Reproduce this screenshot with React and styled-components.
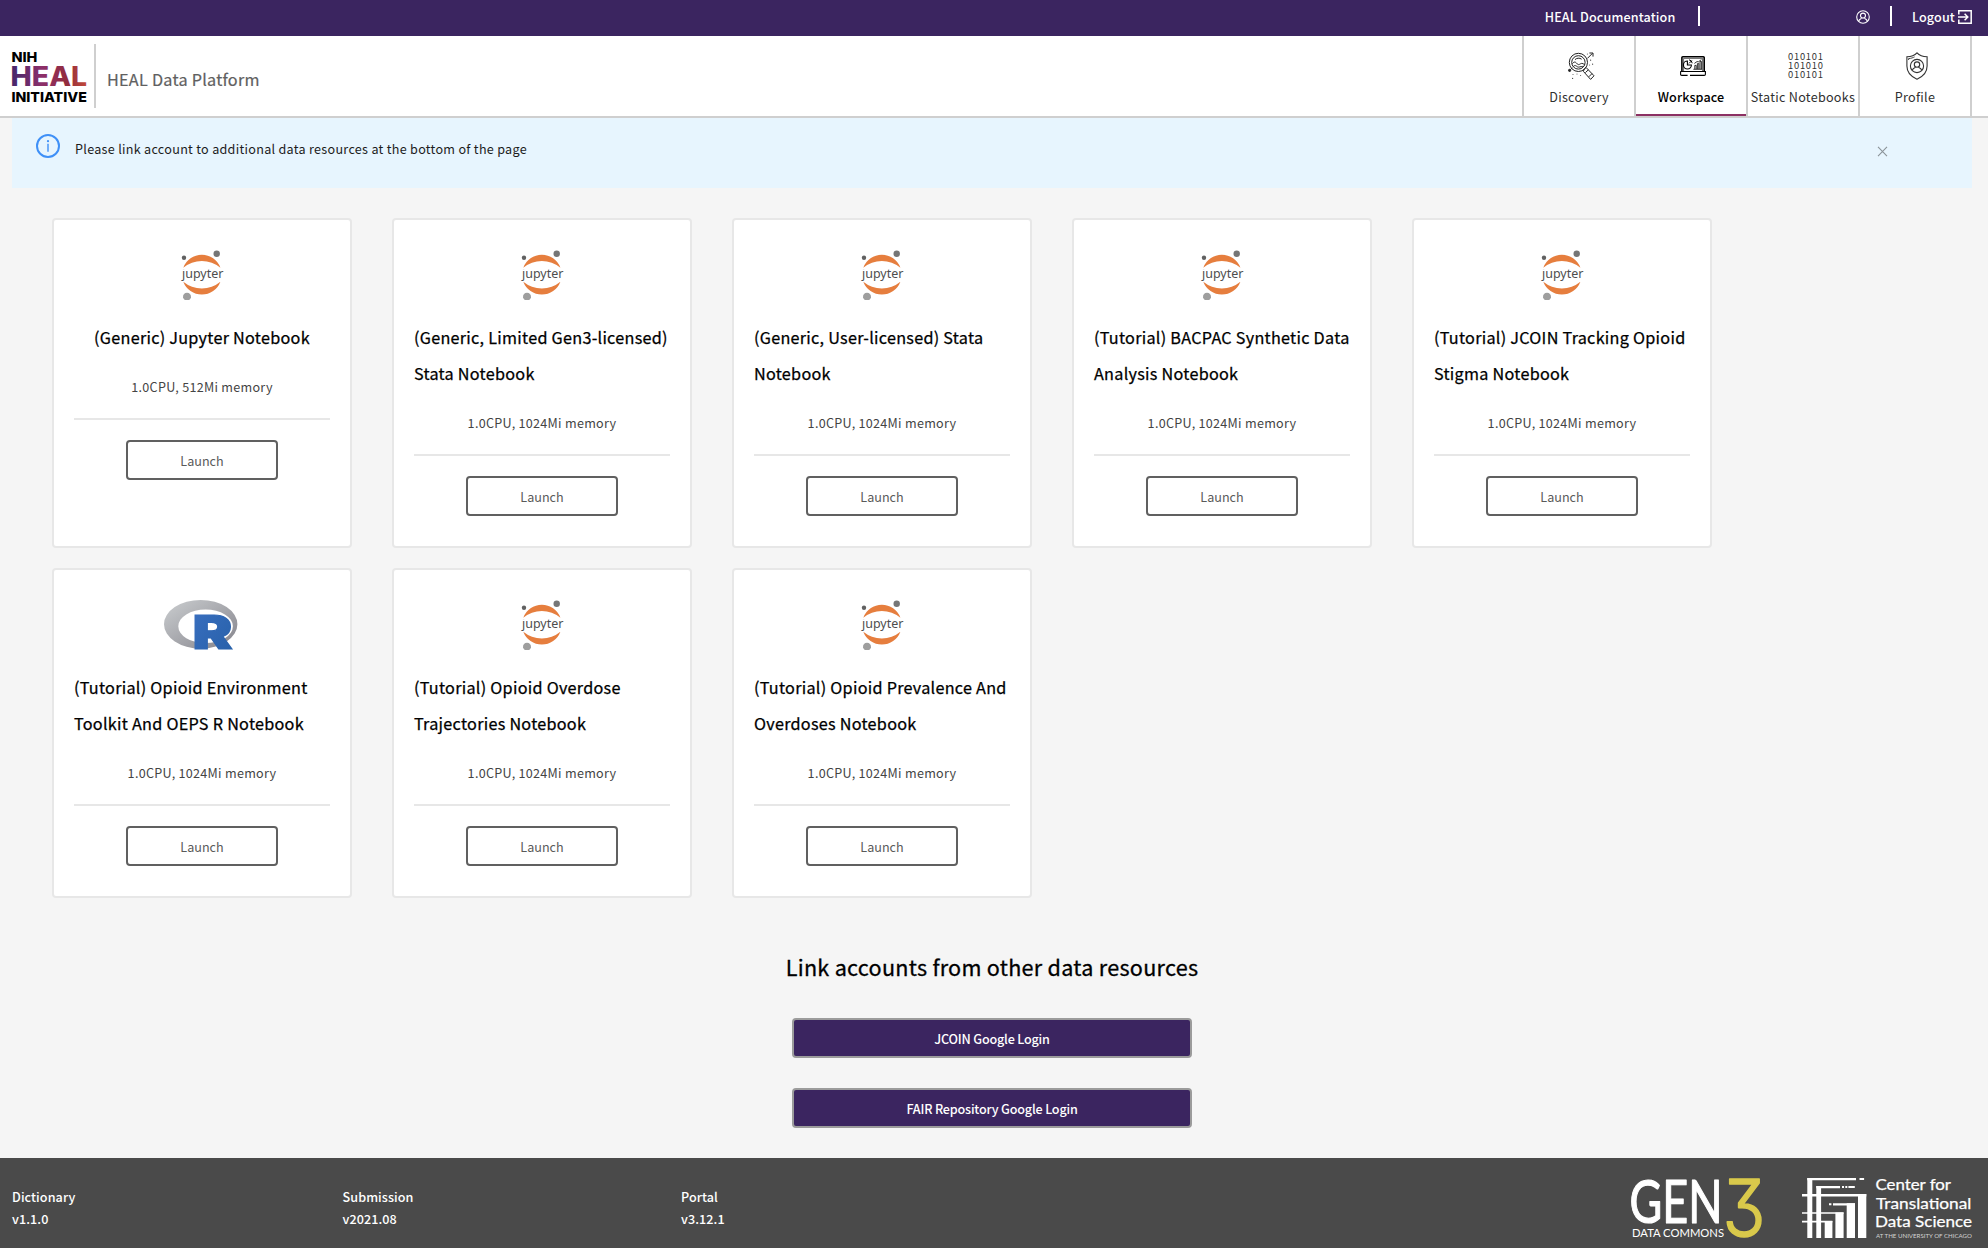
import React from "react";
import styled, { createGlobalStyle } from "styled-components";

const SANS = '"Noto Sans CJK SC", "Noto Sans", sans-serif';
const PURPLE = "#3b2560";
const LINE = "#cfcfcf";

const GlobalStyle = createGlobalStyle`
  *, *::before, *::after { box-sizing: border-box; }
  body {
    margin: 0;
    background: #f5f5f5;
    font-family: ${SANS};
    font-size: 12.6px;
    letter-spacing: 0.28px;
    color: #262626;
  }
  button { font-family: inherit; margin: 0; cursor: pointer; }
  svg { display: block; flex: none; overflow: visible; }
`;

const Page = styled.div`
  display: flex;
  flex-direction: column;
  height: 1248px;
  width: 100%;
`;

const TopBar = styled.div`
  display: flex;
  justify-content: flex-end;
  align-items: flex-start;
  height: 36px;
  padding: 6px 16px 0 0;
  background: ${PURPLE};
  color: #fff;
`;

const TopLink = styled.a`
  display: flex;
  align-items: center;
  gap: 3px;
  height: 22px;
  padding: ${(p) => p.$pad};
  font-weight: 500;
  letter-spacing: 0.14px;
  line-height: 22px;
`;

const TopDivider = styled.span`
  width: 2px;
  height: 20px;
  background: #fff;
`;

const NavBar = styled.header`
  display: flex;
  justify-content: space-between;
  height: 82px;
  padding: 0 16px 0 12px;
  background: #fff;
  border-bottom: 2px solid ${LINE};
`;

const Brand = styled.div`
  display: flex;
  align-items: flex-start;
  padding-top: 8px;
`;

const BrandMark = styled.div`
  height: 64px;
  width: 84px;
  padding-top: 7px;
  border-right: 2px solid ${LINE};
`;

const BrandName = styled.div`
  margin: 15px 0 0 11px;
  font-size: 16.2px;
  line-height: 40px;
  letter-spacing: 0.26px;
  color: #606060;
  -webkit-text-stroke: 0.2px #606060;
`;

const Nav = styled.nav`
  display: flex;
  border-right: 2px solid ${LINE};
`;

const NavItem = styled.a`
  display: flex;
  flex-direction: column;
  align-items: center;
  width: 112px;
  height: 80px;
  padding-top: 14px;
  border-left: 2px solid ${LINE};
  box-shadow: ${(p) => (p.$active ? "inset 0 -2px 0 #8c3063" : "none")};
  color: ${(p) => (p.$active ? "#000" : "#303030")};
  font-weight: ${(p) => (p.$active ? 500 : 400)};
  letter-spacing: ${(p) => (p.$active ? "0.1px" : "0.28px")};
`;

const NavIcon = styled.span`
  display: flex;
  align-items: center;
  justify-content: center;
  height: 32px;
  padding-left: 4px;
`;

const NavLabel = styled.span`
  margin-top: 4px;
  line-height: 22px;
  white-space: nowrap;
`;

const Main = styled.main`
  flex: 1;
  display: flex;
  flex-direction: column;
  padding: 0 16px 0 12px;
`;

const Banner = styled.div`
  display: flex;
  align-items: flex-start;
  height: 70px;
  padding: 16px 84px 0 24px;
  background: #e7f5fe;
`;

const BannerText = styled.span`
  flex: 1;
  margin-left: 15px;
  line-height: 30px;
  letter-spacing: 0.29px;
  color: #1c1c1c;
`;

const BannerClose = styled.span`
  padding-top: 12px;
`;

const Cards = styled.section`
  display: flex;
  flex-wrap: wrap;
  gap: 20px 40px;
  margin: 30px 40px 0;
`;

const Card = styled.article`
  display: flex;
  flex-direction: column;
  align-items: center;
  width: 300px;
  height: 330px;
  padding: 30px 20px 0;
  background: #fff;
  border: 2px solid #e7e7e7;
  border-radius: 4px;
`;

const CardTitle = styled.h3`
  margin: 19px 0 0;
  font-size: 16.2px;
  font-weight: 400;
  line-height: 36px;
  letter-spacing: 0.27px;
  color: #000;
  -webkit-text-stroke: 0.25px #000;
`;

const CardMeta = styled.div`
  margin-top: 21px;
  line-height: 22px;
  color: #444;
`;

const CardRule = styled.hr`
  width: 100%;
  height: 2px;
  margin: 20px 0;
  border: 0;
  background: #e7e7e7;
`;

const LaunchButton = styled.button`
  width: 152px;
  height: 40px;
  padding: 2px 0 0;
  border: 2px solid #606060;
  border-radius: 4px;
  background: #fff;
  font-size: 12.6px;
  line-height: 34px;
  color: #5a5a5a;
`;

const Accounts = styled.section`
  display: flex;
  flex-direction: column;
  align-items: center;
  gap: 30px;
  margin-top: 49px;
`;

const AccountsTitle = styled.h2`
  margin: 0 0 1px;
  font-size: 21.6px;
  font-weight: 400;
  line-height: 40px;
  letter-spacing: 0.27px;
  color: #000;
  -webkit-text-stroke: 0.3px #000;
`;

const LoginButton = styled.button`
  width: 400px;
  height: 40px;
  padding: 2px 0 0;
  border: 2px solid #9b9b9b;
  border-radius: 4px;
  background: ${PURPLE};
  font-size: 12.6px;
  font-weight: 500;
  letter-spacing: -0.18px;
  line-height: 34px;
  color: #fff;
`;

const Footer = styled.footer`
  display: flex;
  justify-content: space-between;
  height: 90px;
  padding: 20px 16px 0 12px;
  background: #4a4a4a;
  color: #fff;
`;

const Versions = styled.div`
  display: grid;
  grid-template-columns: 330.5px 338.5px auto;
  padding-top: 8px;
  font-weight: 500;
  line-height: 22px;
  letter-spacing: 0.08px;
`;

const Logos = styled.div`
  display: flex;
  gap: 40px;
`;

const FlatThree = styled.text`
  font-family: Inter, sans-serif;
  font-weight: 300;
  font-feature-settings: "cv09";
`;

function HealLogo() {
  return (
    <svg width="76" height="54" viewBox="0 0 76 54" fontFamily="Inter, sans-serif" fontWeight="800" letterSpacing="0">
      <defs>
        <linearGradient id="heal" x1="0" y1="0" x2="74" y2="0" gradientUnits="userSpaceOnUse">
          <stop offset="0" stopColor="#45276b" />
          <stop offset="0.4" stopColor="#8c2f6b" />
          <stop offset="0.75" stopColor="#932c3c" />
          <stop offset="1" stopColor="#c0493a" />
        </linearGradient>
      </defs>
      <text x="-0.6" y="11" fontSize="13.6" textLength="26" lengthAdjust="spacingAndGlyphs">NIH</text>
      <text x="-1.4" y="35.3" fontSize="26.8" textLength="76.5" lengthAdjust="spacingAndGlyphs" fill="url(#heal)">HEAL</text>
      <text x="-0.6" y="51" fontSize="13.8" textLength="75.4" lengthAdjust="spacingAndGlyphs">INITIATIVE</text>
    </svg>
  );
}

function UserIcon() {
  return (
    <svg width="14" height="14" viewBox="0 0 14 14" fill="none" stroke="#fff" strokeWidth="1.1">
      <circle cx="7" cy="7" r="6.3" />
      <circle cx="7" cy="5.6" r="2.5" />
      <path d="M2.6 11.3C3 9.6 4.2 8.9 5.6 8.3M11.4 11.3C11 9.6 9.8 8.9 8.4 8.3" />
    </svg>
  );
}

function LogoutIcon() {
  return (
    <svg width="14" height="14" viewBox="0 0 14 14" fill="none" stroke="#fff" strokeWidth="1.5">
      <path d="M0.8 4.4V0.8H13.2V13.2H0.8V9.6" />
      <path d="M0 7H9.6M6.6 3.8L9.8 7L6.6 10.2" />
    </svg>
  );
}

function DiscoveryIcon() {
  return (
    <svg width="26" height="28" viewBox="0 0 26 28" fill="none" stroke="#222" strokeWidth="1">
      <circle cx="10.4" cy="10.4" r="9.1" />
      <circle cx="10.4" cy="10.4" r="6.7" />
      <path d="M4.4 11.6C6.6 8.8 8 10.4 9.3 12C10.8 13.8 12.4 11.2 14 11.4C15.4 11.6 16 12.4 16.6 12.8M5.4 14.4C7 12.8 8 13.8 9.4 14.8C11 15.8 12.6 14.2 14.8 14.4M7 7.6C8.6 6 11.6 5.6 13.6 7.2" />
      <path d="M16.2 17L18 15.4L26 23.8L22.6 27.4L15.4 19.4ZM17.4 20.6L20.4 17.8M20.8 24.8L24 21.6" />
      <path d="M19.4 6.4L24.4 1.4M21.4 1H25V4.6" />
      <circle cx="1.6" cy="18.4" r="1.1" fill="#222" />
      <path d="M2.4 17.6L4.4 15.8" />
      <g fill="#444" stroke="none">
        <circle cx="22.6" cy="8.2" r="0.6" /><circle cx="24.6" cy="12.2" r="0.6" />
        <circle cx="21.6" cy="13" r="0.5" /><circle cx="9" cy="22" r="0.5" />
        <circle cx="12.6" cy="23.4" r="0.5" /><circle cx="4.6" cy="26.4" r="0.6" />
        <circle cx="5" cy="22.4" r="0.5" /><circle cx="19.4" cy="2" r="0.5" />
      </g>
    </svg>
  );
}

function WorkspaceIcon() {
  return (
    <svg width="26" height="20" viewBox="0 0 26 20" fill="none" stroke="#000">
      <path d="M1.9 15.4V1.6Q1.9 0.8 2.8 0.8H23.4Q24.2 0.8 24.2 1.6V15.4" strokeWidth="1.6" />
      <path d="M3.6 15V2.4H22.6V15" strokeWidth="0.6" />
      <path d="M0.6 15.5H25.4V18.2Q25.4 19.4 24.2 19.4H10M7.6 19.4H1.8Q0.6 19.4 0.6 18.2V15.2" strokeWidth="1.1" />
      <path d="M7.4 5A4 4 0 1 0 11.4 9H7.4Z" strokeWidth="1.1" />
      <path d="M9 7.4L11.8 4.6M9 3.8A3.8 3.8 0 0 1 12.2 7.2" strokeWidth="1" />
      <path d="M13.4 13.3H22M14.8 13V9.4H16.2V13M17.4 13V7.6H18.8V13M20 13V5.4H21.4V13M14.4 7.4L17 5.6L18.4 5.8L21.4 3.6" strokeWidth="0.8" />
    </svg>
  );
}

function BinaryIcon() {
  return (
    <svg width="36" height="28" viewBox="0 0 36 28" fontFamily='"Noto Sans CJK SC", sans-serif' fontSize="9.4" fill="#333" letterSpacing="0">
      <text x="1" y="7.6" textLength="35">010101</text>
      <text x="1" y="16.9" textLength="35">101010</text>
      <text x="1" y="26.2" textLength="35">010101</text>
    </svg>
  );
}

function ProfileIcon() {
  return (
    <svg width="22" height="28" viewBox="0 0 22 28" fill="none" stroke="#333" strokeWidth="1.1">
      <path d="M11 0.8C8.6 3.4 4.8 4.6 0.9 4.7V14C0.9 20.4 5 24.6 11 27.2C17 24.6 21.1 20.4 21.1 14V4.7C17.2 4.6 13.4 3.4 11 0.8Z" />
      <path d="M2.6 8V6.6C5.2 6.4 7.2 5.6 8.6 4.9" strokeWidth="0.9" />
      <circle cx="11" cy="14" r="6.6" />
      <circle cx="11" cy="12.6" r="2.7" />
      <path d="M6.2 18.4C6.6 16.6 8 15.8 9.6 15.2M15.8 18.4C15.4 16.6 14 15.8 12.4 15.2" />
    </svg>
  );
}

function InfoIcon() {
  return (
    <svg width="24" height="24" viewBox="0 0 24 24" fill="none" stroke="#3f90f7">
      <circle cx="12" cy="12" r="11" strokeWidth="2" />
      <path d="M12 9.8V17.8" strokeWidth="1.4" />
      <circle cx="12" cy="7.2" r="1.1" fill="#3f90f7" stroke="none" />
    </svg>
  );
}

function CloseIcon() {
  return (
    <svg width="11" height="11" viewBox="0 0 11 11" stroke="#8b9399" strokeWidth="1.1">
      <path d="M1 0.8L10 10.2M10 0.8L1 10.2" />
    </svg>
  );
}

function JupyterLogo() {
  return (
    <svg width="43" height="50" viewBox="0 0 43 50">
      <text x="1" y="27.6" fontFamily='"Noto Sans", sans-serif' fontSize="12.6" letterSpacing="0" fill="#4e4e4e" textLength="41.4" lengthAdjust="spacingAndGlyphs">jupyter</text>
      <rect x="0" y="15" width="5" height="4.6" fill="#fff" />
      <path d="M2.3 17.7A19.8 19.8 0 0 1 39.4 17.7A29 29 0 0 0 2.3 17.7Z" fill="#e67e3e" />
      <path d="M2.3 31.7A19.8 19.8 0 0 0 39.4 31.7A29 29 0 0 1 2.3 31.7Z" fill="#e67e3e" />
      <circle cx="3" cy="7.7" r="2.2" fill="#616161" />
      <circle cx="35.7" cy="3.8" r="3.2" fill="#767676" />
      <path d="M3.8 50A4 4 0 1 1 8.2 50Z" fill="#9e9e9e" />
    </svg>
  );
}

function RLogo() {
  return (
    <svg width="76" height="50" viewBox="0 0 76 50">
      <defs>
        <linearGradient id="ring" x1="0" y1="0" x2="1" y2="1">
          <stop offset="0" stopColor="#cbced0" />
          <stop offset="1" stopColor="#84838b" />
        </linearGradient>
        <linearGradient id="letter" x1="0" y1="0" x2="1" y2="1">
          <stop offset="0" stopColor="#3a6fc0" />
          <stop offset="1" stopColor="#2660a8" />
        </linearGradient>
      </defs>
      <path fillRule="evenodd" fill="url(#ring)" d="M0 24.3a36.7 24.3 0 1 0 73.4 0a36.7 24.3 0 1 0 -73.4 0ZM14.3 26.3a27.3 16.8 0 1 1 54.6 0a27.3 16.8 0 1 1 -54.6 0Z" />
      <text x="28.4" y="49.4" fontFamily="Inter, sans-serif" fontWeight="900" fontSize="46.8" letterSpacing="0" textLength="40" lengthAdjust="spacingAndGlyphs" fill="url(#letter)" stroke="url(#letter)" strokeWidth="1.2">R</text>
    </svg>
  );
}

function Gen3Logo() {
  return (
    <svg width="130" height="60" viewBox="0 0 130 60" fontFamily="Lato, sans-serif" letterSpacing="0">
      <text x="-2.5" y="44.6" fontSize="60" textLength="93" lengthAdjust="spacingAndGlyphs" fill="#fff" stroke="#fff" strokeWidth="1.2" strokeLinejoin="round">GEN</text>
      <text x="0" y="58.6" fontSize="12" textLength="92" lengthAdjust="spacingAndGlyphs" fill="#fff">DATA COMMONS</text>
      <FlatThree x="90.5" y="58.4" fontSize="79" textLength="43" lengthAdjust="spacingAndGlyphs" fill="#d9c94b" stroke="#d9c94b" strokeWidth="1.6" strokeLinejoin="round">3</FlatThree>
    </svg>
  );
}

function CtdsLogo() {
  return (
    <svg width="170" height="60" viewBox="0 0 170 60" fill="#fff" fontFamily="Lato, sans-serif" letterSpacing="0">
      <path d="M5.3 0h48.7v2.2h-48.7zM57.5 0h4.6v2h-4.6zM14.3 8h23.7v2.2h-23.7zM40 8h2v2h-2zM43.3 8h2v2h-2zM46.4 8h6.4v2h-6.4zM0 16h64.3v2.4h-64.3zM27 25.2h2.4v2h-2.4zM31 25.2h22v2.2h-22zM0 34.2h41.6v1.6h-41.6zM0 42.8h30.4v1.8h-30.4z" />
      <path d="M5.3 0h5v60h-5zM14.3 8h4.8v52h-4.8zM22.7 43h7.7v17h-7.7zM33.4 34.4h8.2v25.6h-8.2zM44.7 25.2h8.3v34.8h-8.3zM56 16h8.3v44h-8.3z" />
      <text x="73.4" y="12" fontSize="16" textLength="75.6" lengthAdjust="spacingAndGlyphs" stroke="#fff" strokeWidth="0.25">Center for</text>
      <text x="74" y="30.8" fontSize="16" textLength="95.4" lengthAdjust="spacingAndGlyphs" stroke="#fff" strokeWidth="0.25">Translational</text>
      <text x="73" y="49.4" fontSize="16" textLength="97" lengthAdjust="spacingAndGlyphs" stroke="#fff" strokeWidth="0.25">Data Science</text>
      <text x="74" y="59.8" fontSize="5.6" textLength="96" lengthAdjust="spacingAndGlyphs" fill="#d4d4d4">AT THE UNIVERSITY OF CHICAGO</text>
    </svg>
  );
}

const NAV = [
  { label: "Discovery", Icon: DiscoveryIcon },
  { label: "Workspace", Icon: WorkspaceIcon, active: true },
  { label: "Static Notebooks", Icon: BinaryIcon },
  { label: "Profile", Icon: ProfileIcon },
];

const WORKSPACES = [
  { title: ["(Generic) Jupyter Notebook"], memory: "512Mi" },
  { title: ["(Generic, Limited Gen3-licensed)", "Stata Notebook"] },
  { title: ["(Generic, User-licensed) Stata", "Notebook"] },
  { title: ["(Tutorial) BACPAC Synthetic Data", "Analysis Notebook"] },
  { title: ["(Tutorial) JCOIN Tracking Opioid", "Stigma Notebook"] },
  { title: ["(Tutorial) Opioid Environment", "Toolkit And OEPS R Notebook"], Logo: RLogo },
  { title: ["(Tutorial) Opioid Overdose", "Trajectories Notebook"] },
  { title: ["(Tutorial) Opioid Prevalence And", "Overdoses Notebook"] },
];

const TitleBlock = styled.div`
  width: ${(p) => (p.$wide ? "100%" : "auto")};
  white-space: nowrap;
`;

function WorkspaceCard({ title, memory = "1024Mi", Logo = JupyterLogo }) {
  return (
    <Card>
      <Logo />
      <TitleBlock $wide={title.length > 1}>
        <CardTitle>
          {title.map((line, i) => (
            <React.Fragment key={line}>
              {i > 0 && <br />}
              {line}
            </React.Fragment>
          ))}
        </CardTitle>
      </TitleBlock>
      <CardMeta>1.0CPU, {memory} memory</CardMeta>
      <CardRule />
      <LaunchButton>Launch</LaunchButton>
    </Card>
  );
}

export default function App() {
  return (
    <Page>
      <GlobalStyle />
      <TopBar>
        <TopLink $pad="0 22.5px 0 0">HEAL Documentation</TopLink>
        <TopDivider />
        <TopLink $pad="0 20px 0 156px"><UserIcon /></TopLink>
        <TopDivider />
        <TopLink $pad="0 0 0 20px">Logout<LogoutIcon /></TopLink>
      </TopBar>
      <NavBar>
        <Brand>
          <BrandMark><HealLogo /></BrandMark>
          <BrandName>HEAL Data Platform</BrandName>
        </Brand>
        <Nav>
          {NAV.map(({ label, Icon, active }) => (
            <NavItem key={label} $active={active}>
              <NavIcon><Icon /></NavIcon>
              <NavLabel>{label}</NavLabel>
            </NavItem>
          ))}
        </Nav>
      </NavBar>
      <Main>
        <Banner>
          <InfoIcon />
          <BannerText>Please link account to additional data resources at the bottom of the page</BannerText>
          <BannerClose><CloseIcon /></BannerClose>
        </Banner>
        <Cards>
          {WORKSPACES.map((w) => <WorkspaceCard key={w.title[0]} {...w} />)}
        </Cards>
        <Accounts>
          <AccountsTitle>Link accounts from other data resources</AccountsTitle>
          <LoginButton>JCOIN Google Login</LoginButton>
          <LoginButton>FAIR Repository Google Login</LoginButton>
        </Accounts>
      </Main>
      <Footer>
        <Versions>
          <div>Dictionary<br />v1.1.0</div>
          <div>Submission<br />v2021.08</div>
          <div>Portal<br />v3.12.1</div>
        </Versions>
        <Logos>
          <Gen3Logo />
          <CtdsLogo />
        </Logos>
      </Footer>
    </Page>
  );
}
